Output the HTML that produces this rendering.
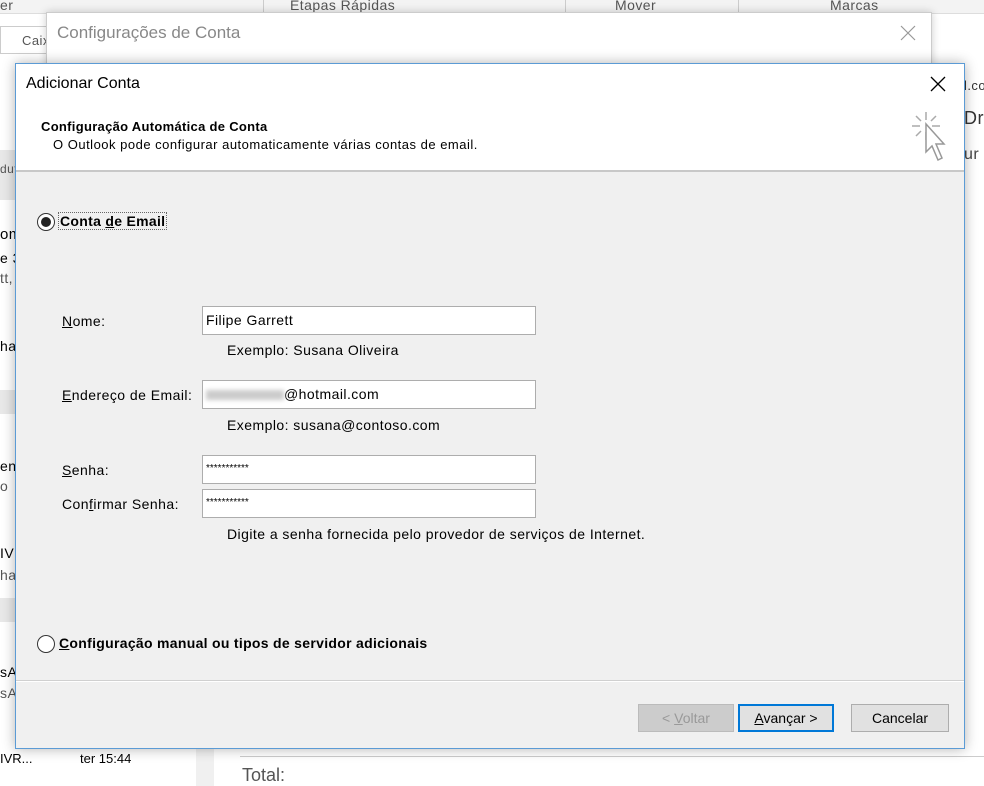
<!DOCTYPE html>
<html><head><meta charset="utf-8"><style>
*{margin:0;padding:0;box-sizing:border-box}
body{width:984px;height:786px;overflow:hidden;background:#fff;position:relative;font-family:"Liberation Sans",sans-serif;font-size:14px;letter-spacing:.45px;color:#000}
.a{position:absolute;white-space:nowrap}
.g{color:#555}
.inp{position:absolute;left:202px;width:334px;height:29px;background:#fff;border:1px solid #adadad;padding:5px 3px;font-size:14px}
.btn{position:absolute;top:704px;height:28px;border:1px solid #adadad;background:#e1e1e1;text-align:center;line-height:26px;font-size:14px;letter-spacing:0}
u{text-decoration:underline}
</style></head><body>
<div class="a" style="left:0;top:0;width:984px;height:14px;background:#f3f3f3;border-bottom:1px solid #ddd"></div>
<div class="a g" style="left:0;top:-3px">er</div>
<div class="a g" style="left:290px;top:-3px">Etapas Rápidas</div>
<div class="a g" style="left:615px;top:-3px">Mover</div>
<div class="a g" style="left:830px;top:-3px">Marcas</div>
<div class="a" style="left:263px;top:0;width:1px;height:14px;background:#ccc"></div>
<div class="a" style="left:565px;top:0;width:1px;height:14px;background:#ccc"></div>
<div class="a" style="left:738px;top:0;width:1px;height:14px;background:#ccc"></div>
<div class="a" style="left:0;top:26px;width:50px;height:28px;border:1px solid #ccc;background:#fff"></div>
<div class="a g" style="left:22px;top:33px;font-size:13px">Caix</div>
<div class="a" style="left:0;top:150px;width:15px;height:50px;background:#e8e8e8"></div>
<div class="a g" style="left:0;top:162px;font-size:12px">dut</div>
<div class="a" style="left:0;top:226px;font-size:15px">om</div>
<div class="a" style="left:0;top:250px">e 3</div>
<div class="a g" style="left:0;top:270px">tt,</div>
<div class="a" style="left:0;top:338px">ha</div>
<div class="a" style="left:0;top:390px;width:15px;height:24px;background:#e8e8e8"></div>
<div class="a" style="left:0;top:458px">en</div>
<div class="a g" style="left:0;top:478px">o</div>
<div class="a" style="left:0;top:545px">IVF</div>
<div class="a g" style="left:0;top:567px">ha</div>
<div class="a" style="left:0;top:598px;width:15px;height:24px;background:#e8e8e8"></div>
<div class="a" style="left:0;top:664px">sA</div>
<div class="a g" style="left:0;top:685px">sA</div>
<div class="a" style="left:0;top:751px;font-size:13px;letter-spacing:0">IVR...</div>
<div class="a" style="left:80px;top:751px;font-size:13px;letter-spacing:0">ter 15:44</div>
<div class="a" style="left:196px;top:740px;width:18px;height:46px;background:#f0f0f0"></div>
<div class="a" style="left:240px;top:756px;width:744px;height:1px;background:#ccc"></div>
<div class="a g" style="left:242px;top:765px;font-size:18px;letter-spacing:0">Total:</div>
<div class="a" style="left:964px;top:78px;font-size:13px;color:#333">l.co</div>
<div class="a" style="left:964px;top:108px;font-size:18px;color:#333">Dri</div>
<div class="a" style="left:964px;top:146px;font-size:16px;color:#444">ur</div>
<div class="a" style="left:46px;top:12px;width:886px;height:60px;background:#fff;border:1px solid #ccc;box-shadow:0 0 8px rgba(0,0,0,.2)"></div>
<div class="a" style="left:57px;top:23px;font-size:17px;color:#888;letter-spacing:0">Configurações de Conta</div>
<svg class="a" style="left:900px;top:25px" width="16" height="16"><path d="M1 1L15 15M15 1L1 15" stroke="#999" stroke-width="1.2"/></svg>
<div class="a" style="left:15px;top:63px;width:950px;height:686px;background:#f0f0f0;border:1px solid #5b9bd5;box-shadow:0 0 12px rgba(0,0,0,.3)"></div>
<div class="a" style="left:16px;top:64px;width:948px;height:108px;background:#fff;border-bottom:2px solid #c8c8c8"></div>
<div class="a" style="left:26px;top:75px;font-size:16px;letter-spacing:0">Adicionar Conta</div>
<svg class="a" style="left:930px;top:76px" width="16" height="16"><path d="M1 1L15 15M15 1L1 15" stroke="#000" stroke-width="1.3"/></svg>
<div class="a" style="left:41px;top:119px;font-weight:bold;font-size:13px;letter-spacing:.3px">Configuração Automática de Conta</div>
<div class="a" style="left:53px;top:137px;font-size:13px;letter-spacing:.5px">O Outlook pode configurar automaticamente várias contas de email.</div>
<svg class="a" style="left:906px;top:110px" width="44" height="58"><g stroke="#aaa" stroke-width="1.5"><path d="M20 2V10M20 22V30M6 16H14M26 16H34M10 6L15 11M30 6L25 11M10 26L15 21"/></g><path d="M20 14L20 42L26 36L32 50L36 48L30 34L38 34Z" fill="#fff" stroke="#999" stroke-width="1.5"/></svg>
<div class="a" style="left:37px;top:213px;width:18px;height:18px;border-radius:50%;border:1px solid #333;background:#fff"></div>
<div class="a" style="left:41px;top:217px;width:10px;height:10px;border-radius:50%;background:#222"></div>
<div class="a" style="left:58px;top:212px;font-weight:bold;border:1px dotted #666;padding:0 1px;letter-spacing:.3px">Conta <u>d</u>e Email</div>
<div class="a" style="left:62px;top:313px"><u>N</u>ome:</div>
<div class="inp" style="top:306px">Filipe Garrett</div>
<div class="a" style="left:227px;top:342px">Exemplo: Susana Oliveira</div>
<div class="a" style="left:62px;top:387px"><u>E</u>ndereço de Email:</div>
<div class="inp" style="top:380px"><span style="display:inline-block;width:78px;height:10px;background:#ccc;filter:blur(2px);vertical-align:middle"></span>@hotmail.com</div>
<div class="a" style="left:227px;top:417px">Exemplo: susana@contoso.com</div>
<div class="a" style="left:62px;top:462px"><u>S</u>enha:</div>
<div class="inp" style="top:455px;font-size:10px;padding-top:7px;letter-spacing:0">***********</div>
<div class="a" style="left:62px;top:496px">Con<u>f</u>irmar Senha:</div>
<div class="inp" style="top:489px;font-size:10px;padding-top:7px;letter-spacing:0">***********</div>
<div class="a" style="left:227px;top:526px">Digite a senha fornecida pelo provedor de serviços de Internet.</div>
<div class="a" style="left:37px;top:635px;width:18px;height:18px;border-radius:50%;border:1px solid #333;background:#fff"></div>
<div class="a" style="left:59px;top:635px;font-weight:bold;letter-spacing:.3px"><u>C</u>onfiguração manual ou tipos de servidor adicionais</div>
<div class="a" style="left:16px;top:680px;width:948px;height:2px;background:#d0d0d0;border-bottom:1px solid #fff"></div>
<div class="btn" style="left:638px;width:96px;color:#999;background:#ccc;border-color:#bbb">&lt; <u>V</u>oltar</div>
<div class="btn" style="left:738px;width:96px;border:2px solid #0078d7;line-height:24px"><u>A</u>vançar &gt;</div>
<div class="btn" style="left:851px;width:98px">Cancelar</div>
</body></html>
